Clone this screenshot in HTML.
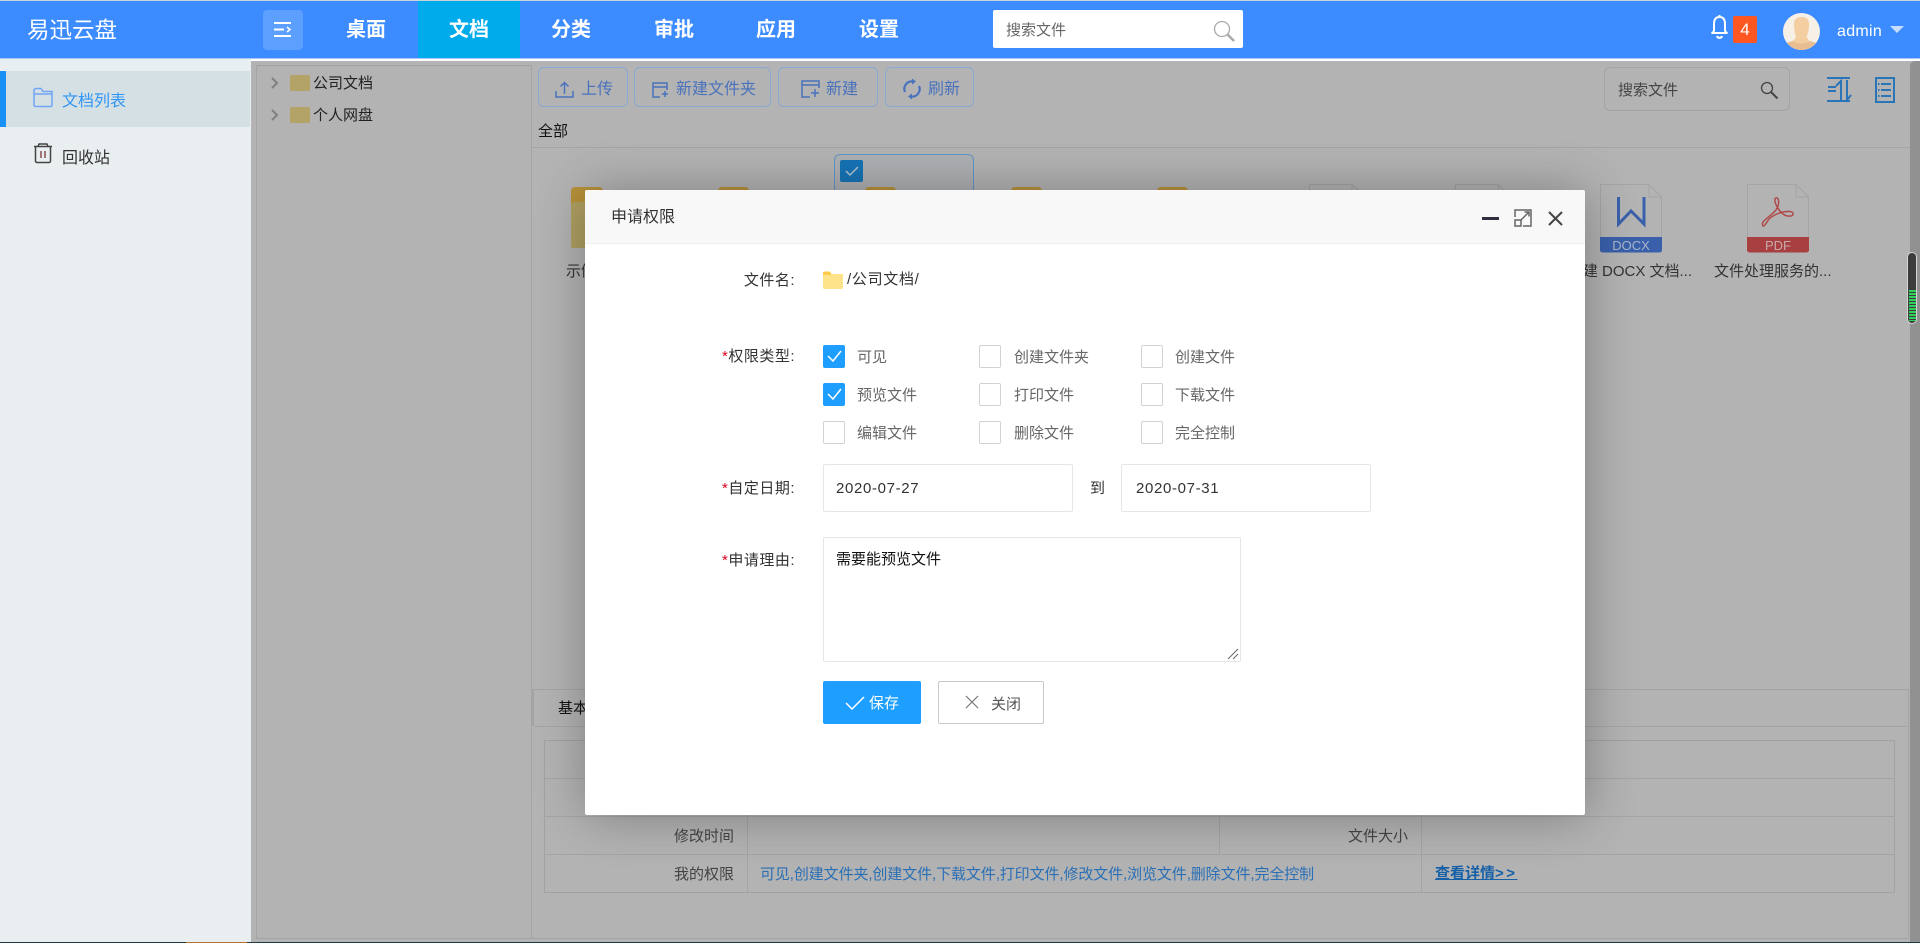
<!DOCTYPE html>
<html lang="zh-CN"><head><meta charset="utf-8"><title>易迅云盘</title>
<style>
*{box-sizing:border-box;margin:0;padding:0}
html,body{width:1920px;height:943px;overflow:hidden;background:#b3b3b3}
body{position:relative;font:15px/20px "Liberation Sans","Noto Sans CJK SC",sans-serif;color:#333}
.a,.t{position:absolute}
.t{white-space:nowrap;line-height:20px}
.nav{position:absolute;top:2px;height:57px;width:102px;line-height:57px;text-align:center;color:#fff;font-size:20px;font-weight:bold}
.tile{position:absolute;left:418px;top:1px;width:102px;height:57px;background:#00abeb}
.btn{position:absolute;top:67px;height:40px;border:1px solid #8aa9d2;border-radius:6px}
.bt{color:#4a72bc;font-size:16px}
.hl{position:absolute;height:1px;background:#a4a4a4}
.vl{position:absolute;width:1px;background:#a4a4a4}
.cb{position:absolute;width:22px;height:23px;border:1px solid #d2d2d2;border-radius:2px;background:#fff}
.cb.on{background:#1e9fff;border-color:#1e9fff}
.cb svg{position:absolute;left:3px;top:3px}
.cl{color:#666}
.in{position:absolute;background:#fff;border:1px solid #e6e6e6;border-radius:2px}
.lab{position:absolute;width:100px;left:695px;text-align:right;white-space:nowrap;line-height:20px;color:#333;letter-spacing:.5px}
.lab i{color:#d9001b;font-style:normal}
svg{position:absolute;overflow:visible}
</style></head><body>

<!-- header -->
<div class="a" style="left:0;top:0;width:1920px;height:1px;background:#c9d3dc"></div>
<div class="a" style="left:0;top:1px;width:1920px;height:57px;background:#3d8cff"></div>
<div class="a" style="left:0;top:58px;width:1920px;height:1px;background:#a6caff"></div>
<div class="a" style="left:251px;top:59px;width:1669px;height:2px;background:#fff"></div>
<div class="t" style="left:27px;top:16px;font-size:22.5px;line-height:30px;color:#fff">易迅云盘</div>
<div class="a" style="left:263px;top:10px;width:40px;height:40px;background:#5c9fff;border-radius:4px"></div>
<svg style="left:274px;top:22px" width="17" height="15" fill="none" stroke="#fff" stroke-width="2"><path d="M0 1H17M0 7.500H10M0 14H17"/><path d="M13 5l3 2.500-3 2.500" stroke-width="1.500"/></svg>
<div class="tile"></div>
<div class="nav" style="left:315px">桌面</div>
<div class="nav" style="left:418px">文档</div>
<div class="nav" style="left:520px">分类</div>
<div class="nav" style="left:623px">审批</div>
<div class="nav" style="left:725px">应用</div>
<div class="nav" style="left:828px">设置</div>
<div class="a" style="left:993px;top:10px;width:250px;height:38px;background:#fff;border-radius:2px"></div>
<div class="t" style="left:1006px;top:21px;color:#666">搜索文件</div>
<svg style="left:1213px;top:20px" width="23" height="23" fill="none" stroke="#a9a9a9"><circle cx="9" cy="9" r="7.500" stroke-width="1.300"/><path d="M14.500 14.500L21 21" stroke-width="2.500"/></svg>
<svg style="left:1710px;top:15px" width="19" height="25" fill="none" stroke="#fff" stroke-width="2"><path d="M9.500 2c-4 0-5.500 3-5.500 7v6c0 1.500-1 2.500-2.500 3H17.500c-1.500-.5-2.500-1.500-2.500-3V9c0-4-1.500-7-5.500-7z"/><path d="M9.500 0v2M7 21c.5 2.500 4.500 2.500 5 0"/></svg>
<div class="a" style="left:1733px;top:16px;width:24px;height:27px;background:#ff5722;border-radius:2px;color:#fff;font-size:17px;line-height:27px;text-align:center">4</div>
<svg style="left:1783px;top:13px" width="37" height="37" viewBox="0 0 37 37"><defs><clipPath id="c"><circle cx="18.500" cy="18.500" r="18.500"/></clipPath></defs><g clip-path="url(#c)"><rect width="37" height="37" fill="#f6f0e7"/><path d="M11 11c0-5 3-7 7.500-7S26 6 26 11c0 5-1 10-2.500 13l3 4 10 3v6H0v-6l10-3 3-4C12 21 11 16 11 11z" fill="#f2cea0"/><path d="M0 31l10-3c3 3 14 3 17 0l10 3v6H0z" fill="#e9bd92"/></g></svg>
<div class="t" style="left:1837px;top:22px;font-size:16px;letter-spacing:.3px;color:#fff">admin</div>
<div class="a" style="left:1890px;top:26px;width:0;height:0;border-left:7px solid transparent;border-right:7px solid transparent;border-top:7px solid #c5ddff"></div>

<!-- sidebar -->
<div class="a" style="left:0;top:59px;width:251px;height:884px;background:#e9eef1"></div>
<div class="a" style="left:0;top:71px;width:250px;height:56px;background:#d5e0e5"></div>
<div class="a" style="left:0;top:71px;width:6px;height:56px;background:#1890f5"></div>
<svg style="left:33px;top:87px" width="20" height="21" fill="none" stroke="#72a5f5" stroke-width="1.500"><path d="M1 3.500a2 2 0 0 1 2-2H8l2 3H19V18a1.500 1.500 0 0 1-1.500 1.500H2.500A1.500 1.500 0 0 1 1 18zM1 7H19"/></svg>
<div class="t" style="left:62px;top:92px;font-size:16px;color:#2f96f5">文档列表</div>
<svg style="left:33px;top:143px" width="20" height="21" fill="none" stroke="#444" stroke-width="1.500"><path d="M1 3.500H19M2.500 3.500V18a1.500 1.500 0 0 0 1.500 1.500H16A1.500 1.500 0 0 0 17.500 18V3.500M5 3.500L6 1H14L15 3.500"/><path d="M8 8v7M12 8v7" stroke="#8a4b4b"/></svg>
<div class="t" style="left:62px;top:149px;font-size:16px;color:#333">回收站</div>

<!-- tree -->
<div class="hl" style="left:256px;top:65px;width:276px"></div>
<div class="vl" style="left:256px;top:65px;height:873px"></div>
<div class="vl" style="left:531px;top:65px;height:873px"></div>
<div class="hl" style="left:256px;top:938px;width:1653px"></div>
<svg style="left:271px;top:77px" width="8" height="12" fill="none" stroke="#808080" stroke-width="2"><path d="M1 1l5 5-5 5"/></svg>
<svg style="left:271px;top:109px" width="8" height="12" fill="none" stroke="#808080" stroke-width="2"><path d="M1 1l5 5-5 5"/></svg>
<div class="a" style="left:290px;top:75px;width:20px;height:16px;background:#b3a367;border-radius:1px"></div>
<div class="a" style="left:290px;top:107px;width:20px;height:16px;background:#b3a367;border-radius:1px"></div>
<div class="t" style="left:313px;top:74px;color:#222">公司文档</div>
<div class="t" style="left:313px;top:106px;color:#222">个人网盘</div>

<!-- toolbar -->
<div class="btn" style="left:538px;width:90px"></div>
<svg style="left:555px;top:81px" width="19" height="17" fill="none" stroke="#4a72bc" stroke-width="1.500"><path d="M1 10v6H18V10M9.500 13V2M5.500 5.500L9.500 1.500l4 4"/></svg>
<div class="t bt" style="left:581px;top:80px">上传</div>
<div class="btn" style="left:634px;width:137px"></div>
<svg style="left:652px;top:82px" width="17" height="16" fill="none" stroke="#4a72bc" stroke-width="1.500"><path d="M8 15H1V1H15V8M1 5H15M10 12h6M13 9v6"/></svg>
<div class="t bt" style="left:676px;top:80px">新建文件夹</div>
<div class="btn" style="left:778px;width:100px"></div>
<svg style="left:801px;top:80px" width="19" height="18" fill="none" stroke="#4a72bc" stroke-width="1.500"><path d="M9 17H1V1H18V8M1 5H18M10 13h8M14 9v8"/></svg>
<div class="t bt" style="left:826px;top:80px">新建</div>
<div class="btn" style="left:885px;width:89px"></div>
<svg style="left:903px;top:78px" width="18" height="22" fill="none" stroke="#4a72bc" stroke-width="2.200"><path d="M2 14A7.500 7.500 0 0 1 10 3.500M16 8A7.500 7.500 0 0 1 8 18.500"/><path d="M9 .5l4 3-4 3zM9 15.500l-4 3 4 3z" fill="#4a72bc" stroke="none"/></svg>
<div class="t bt" style="left:928px;top:80px">刷新</div>
<div class="a" style="left:1604px;top:67px;width:186px;height:44px;border:1px solid #a4a4a4;border-radius:6px"></div>
<div class="t" style="left:1618px;top:81px;color:#444">搜索文件</div>
<svg style="left:1760px;top:81px" width="19" height="19" fill="none" stroke="#444"><circle cx="7" cy="7" r="5.500" stroke-width="1.300"/><path d="M11 11L17.500 17.500" stroke-width="2"/></svg>
<svg style="left:1827px;top:77px" width="25" height="25" fill="none" stroke="#2a74b8" stroke-width="2"><path d="M0 1H23M0 24H23M1 10H9M1 14H9M14 24V4L9 9M20 3V23l4-5"/></svg>
<svg style="left:1875px;top:77px" width="20" height="26" fill="none" stroke="#2a74b8" stroke-width="2"><rect x="1" y="1" width="18" height="24"/><path d="M6 7H16M6 13H16M6 19H16M3 7H4.500M3 13H4.500M3 19H4.500"/></svg>
<div class="t" style="left:538px;top:122px;color:#111">全部</div>
<div class="hl" style="left:532px;top:147px;width:1378px"></div>

<!-- file area -->
<div class="a" style="left:834px;top:154px;width:140px;height:100px;border:1px solid #5f96c8;border-radius:6px;background:#aeb0b3"></div>
<div class="a" style="left:840px;top:160px;width:23px;height:22px;background:#1673b5;border-radius:2px"></div>
<svg style="left:845px;top:166px" width="14" height="10" fill="none" stroke="#b3c3cf" stroke-width="1.500"><path d="M1 5l4 4 8-8"/></svg>
<div class="a" style="left:571px;top:187px;width:32px;height:30px;background:#b8923a;border-radius:4px 4px 0 0"></div>
<div class="a" style="left:571px;top:202px;width:60px;height:46px;background:#b0a062;border-radius:4px 0 0 2px"></div>
<div class="t" style="left:566px;top:262px;color:#333">示例文件夹</div>
<div class="a" style="left:718px;top:187px;width:31px;height:20px;background:#b8923a;border-radius:4px 4px 0 0"></div>
<div class="a" style="left:865px;top:187px;width:31px;height:20px;background:#b8923a;border-radius:4px 4px 0 0"></div>
<div class="a" style="left:1011px;top:187px;width:31px;height:20px;background:#b8923a;border-radius:4px 4px 0 0"></div>
<div class="a" style="left:1157px;top:187px;width:31px;height:20px;background:#b8923a;border-radius:4px 4px 0 0"></div>
<svg style="left:1309px;top:184px" width="56" height="20" fill="none" stroke="#a2a2a2"><path d="M.5 20V.5H43L55.500 13V20M43 .5V13H55.500"/></svg>
<svg style="left:1455px;top:184px" width="56" height="20" fill="none" stroke="#a2a2a2"><path d="M.5 20V.5H43L55.500 13V20M43 .5V13H55.500"/></svg>

<svg style="left:1600px;top:184px" width="62" height="69" viewBox="0 0 62 69" fill="none"><path d="M.5 .5H49L61.500 13V66a2 2 0 0 1-2 2H2.500a2 2 0 0 1-2-2z" stroke="#a4a4a4"/><path d="M49 .5V13H61.500" stroke="#a4a4a4"/><path d="M0 53H62V66a2.500 2.500 0 0 1-2.500 2.500H2.500A2.500 2.500 0 0 1 0 66z" fill="#3a60ab"/><path d="M18.500 13V40L31 27L44 40V13" stroke="#3a60ab" stroke-width="3"/><text x="31" y="66" text-anchor="middle" font-size="13" fill="#a9b4c9" font-family="Liberation Sans">DOCX</text></svg>
<svg style="left:1747px;top:184px" width="62" height="69" viewBox="0 0 62 69" fill="none"><path d="M.5 .5H49L61.500 13V66a2 2 0 0 1-2 2H2.500a2 2 0 0 1-2-2z" stroke="#a4a4a4"/><path d="M49 .5V13H61.500" stroke="#a4a4a4"/><path d="M0 53H62V66a2.500 2.500 0 0 1-2.500 2.500H2.500A2.500 2.500 0 0 1 0 66z" fill="#a83f40"/><path d="M16 42C13 37 21 35 29 26C33 20 32 13 29 14C26 15 29 24 36 30C40 33 47 33 46 29C44 26 31 27 22 35C20 38 17 43 16 42Z" stroke="#b04a4a" stroke-width="1.500"/><text x="31" y="66" text-anchor="middle" font-size="13" fill="#c9a9a9" font-family="Liberation Sans">PDF</text></svg>
<div class="t" style="right:228px;top:262px;color:#333">新建 DOCX 文档...</div>
<div class="t" style="left:1714px;top:262px;color:#333">文件处理服务的...</div>

<!-- bottom panel -->
<div class="hl" style="left:532px;top:689px;width:1377px"></div>
<div class="vl" style="left:1908px;top:689px;height:250px"></div>
<div class="vl" style="left:532px;top:689px;height:37px;width:2px"></div>
<div class="hl" style="left:534px;top:726px;width:1373px"></div>
<div class="t" style="left:558px;top:699px;color:#111">基本信息</div>
<div class="a" style="left:544px;top:740px;width:1351px;height:153px;border:1px solid #a2a2a2"></div>
<div class="hl" style="left:544px;top:778px;width:1351px"></div>
<div class="hl" style="left:544px;top:816px;width:1351px"></div>
<div class="hl" style="left:544px;top:854px;width:1351px"></div>
<div class="vl" style="left:747px;top:740px;height:153px"></div>
<div class="vl" style="left:1219px;top:816px;height:38px"></div>
<div class="vl" style="left:1421px;top:740px;height:153px"></div>
<div class="t" style="left:674px;top:827px;color:#444">修改时间</div>
<div class="t" style="left:1348px;top:827px;color:#444">文件大小</div>
<div class="t" style="left:674px;top:865px;color:#444">我的权限</div>
<div class="t" style="left:760px;top:865px;letter-spacing:-.1px;color:#2a6fb5">可见,创建文件夹,创建文件,下载文件,打印文件,修改文件,浏览文件,删除文件,完全控制</div>
<div class="t" style="left:1435px;top:864px;color:#1560a8;font-weight:bold;text-decoration:underline">查看详情<span style="letter-spacing:2.500px">&gt;&gt;</span></div>

<!-- right scroll strip -->
<div class="a" style="left:1910px;top:61px;width:10px;height:881px;background:#919191;border-radius:5px 0 0 0"></div>
<div class="a" style="left:1907px;top:252px;width:10px;height:72px;background:#3c3c3c;border:1px solid #d5d5d5;border-radius:5px"></div>
<div class="a" style="left:1909px;top:290px;width:7px;height:31px;background:repeating-linear-gradient(to bottom,#2fd05c 0 2px,#3c3c3c 2px 3px)"></div>

<!-- bottom strip -->
<div class="a" style="left:0;top:942px;width:1920px;height:1px;background:#1e3a45"></div>
<div class="a" style="left:186px;top:942px;width:61px;height:1px;background:#b8742e"></div>

<!-- dialog -->
<div class="a" style="left:585px;top:190px;width:1000px;height:625px;background:#fff;box-shadow:1px 1px 50px rgba(0,0,0,.3);border-radius:2px"></div>
<div class="a" style="left:585px;top:190px;width:1000px;height:54px;background:#f8f8f8;border-bottom:1px solid #eee;border-radius:2px 2px 0 0"></div>
<div class="t" style="left:611px;top:207px;font-size:16px;line-height:22px;color:#333">申请权限</div>
<div class="a" style="left:1482px;top:217px;width:17px;height:3px;background:#2f2f3f"></div>
<svg style="left:1514px;top:209px" width="18" height="18" fill="none" stroke="#666" stroke-width="1.500"><path d="M1 8V1H17V17H9M7 11L15 3M10.500 3H15V7.500"/><rect x="1" y="11" width="6" height="6"/></svg>
<svg style="left:1548px;top:211px" width="15" height="15" fill="none" stroke="#444" stroke-width="2"><path d="M1 1L14 14M14 1L1 14"/></svg>

<div class="lab" style="top:271px">文件名:</div>
<svg style="left:823px;top:271px" width="20" height="18"><path d="M0 2a1.500 1.500 0 0 1 1.500-1.500H7L9 3H20V16.500a1.500 1.500 0 0 1-1.500 1.500H1.500A1.500 1.500 0 0 1 0 16.500z" fill="#ffe38a"/><path d="M0 2a1.500 1.500 0 0 1 1.500-1.500H7L8 4H0z" fill="#ffc94d"/></svg>
<div class="t" style="left:847px;top:270px;font-size:15px;letter-spacing:.7px;color:#333">/公司文档/</div>

<div class="lab" style="top:347px"><i>*</i>权限类型:</div>
<div class="cb on" style="left:823px;top:345px"><svg width="16" height="14" fill="none" stroke="#fff" stroke-width="1.500"><path d="M1 7l5 5 8-10"/></svg></div>
<div class="t cl" style="left:857px;top:348px">可见</div>
<div class="cb" style="left:979px;top:345px"></div><div class="t cl" style="left:1014px;top:348px">创建文件夹</div>
<div class="cb" style="left:1141px;top:345px"></div><div class="t cl" style="left:1175px;top:348px">创建文件</div>
<div class="cb on" style="left:823px;top:383px"><svg width="16" height="14" fill="none" stroke="#fff" stroke-width="1.500"><path d="M1 7l5 5 8-10"/></svg></div>
<div class="t cl" style="left:857px;top:386px">预览文件</div>
<div class="cb" style="left:979px;top:383px"></div><div class="t cl" style="left:1014px;top:386px">打印文件</div>
<div class="cb" style="left:1141px;top:383px"></div><div class="t cl" style="left:1175px;top:386px">下载文件</div>
<div class="cb" style="left:823px;top:421px"></div><div class="t cl" style="left:857px;top:424px">编辑文件</div>
<div class="cb" style="left:979px;top:421px"></div><div class="t cl" style="left:1014px;top:424px">删除文件</div>
<div class="cb" style="left:1141px;top:421px"></div><div class="t cl" style="left:1175px;top:424px">完全控制</div>

<div class="lab" style="top:479px"><i>*</i>自定日期:</div>
<div class="in" style="left:823px;top:464px;width:250px;height:48px"></div>
<div class="t" style="left:836px;top:479px;letter-spacing:.65px;color:#333">2020-07-27</div>
<div class="t" style="left:1090px;top:479px;color:#333">到</div>
<div class="in" style="left:1121px;top:464px;width:250px;height:48px"></div>
<div class="t" style="left:1136px;top:479px;letter-spacing:.65px;color:#333">2020-07-31</div>

<div class="lab" style="top:551px"><i>*</i>申请理由:</div>
<div class="in" style="left:823px;top:537px;width:418px;height:125px"></div>
<div class="t" style="left:836px;top:550px;color:#111">需要能预览文件</div>
<svg style="left:1228px;top:649px" width="11" height="11" fill="none" stroke="#666"><path d="M0 10L10 0M5 10L10 5"/></svg>

<div class="a" style="left:823px;top:681px;width:98px;height:43px;background:#1e9fff;border-radius:2px"></div>
<svg style="left:845px;top:696px" width="20" height="14" fill="none" stroke="#fff" stroke-width="1.500"><path d="M1 7l6 6L19 1"/></svg>
<div class="t" style="left:869px;top:694px;color:#fff">保存</div>
<div class="a" style="left:938px;top:681px;width:106px;height:43px;background:#fff;border:1px solid #c9c9c9;border-radius:2px"></div>
<svg style="left:965px;top:695px" width="14" height="14" fill="none" stroke="#777" stroke-width="1.200"><path d="M1 1L13 13M13 1L1 13"/></svg>
<div class="t" style="left:991px;top:695px;color:#555">关闭</div>
</body></html>
